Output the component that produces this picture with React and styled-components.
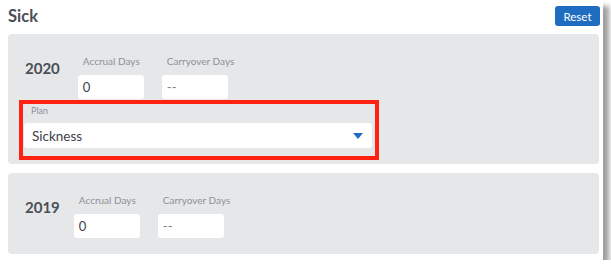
import React from "react";
import styled, { createGlobalStyle } from "styled-components";

const Global = createGlobalStyle`
  html, body { margin: 0; padding: 0; background: #ffffff; }
  body { font-family: "Lato", "Open Sans", sans-serif; }
  * { box-sizing: border-box; }
`;

const Card = styled.div`
  width: 603px;
  height: 260px;
  background: #ffffff;
  box-shadow: 6px 6px 5px rgba(0, 0, 0, 0.38);
  padding: 6px 4px 0 8px;
  display: flex;
  flex-direction: column;
`;

const Header = styled.div`
  display: flex;
  align-items: center;
  justify-content: space-between;
  height: 20px;
`;

const Title = styled.h2`
  margin: 0;
  font-size: 16.5px;
  font-weight: 700;
  color: #4a4f56;
  line-height: 20px;
`;

const ResetButton = styled.button`
  width: 45px;
  height: 20px;
  margin-right: -1px;
  border: none;
  border-radius: 3px;
  background: #1f6dc1;
  color: #ffffff;
  font-family: inherit;
  font-size: 11.5px;
  padding: 0;
`;

const Panel = styled.section`
  background: #e6e7e9;
  border-radius: 4px;
  margin-top: ${(p) => p.$mt}px;
  height: ${(p) => p.$h}px;
  padding: 21px 0 0 17px;
`;

const Row = styled.div`
  display: flex;
  align-items: flex-start;
`;

const Year = styled.div`
  font-size: 15px;
  line-height: 18px;
  font-weight: 700;
  color: #4a4f56;
  margin-top: 4px;
  margin-right: ${(p) => p.$mr}px;
`;

const Field = styled.div`
  display: flex;
  flex-direction: column;
  margin-right: 18px;
`;

const Label = styled.label`
  font-size: 10px;
  line-height: 12px;
  color: #8c9198;
  margin-left: 5px;
  margin-bottom: 8px;
  white-space: nowrap;
`;

const Input = styled.div`
  width: 66px;
  height: 24px;
  background: #ffffff;
  border-radius: 3px;
  padding-left: 5px;
  display: flex;
  align-items: center;
  font-size: 13px;
  color: ${(p) => (p.$muted ? "#7d828a" : "#3d4249")};
`;

const Highlight = styled.div`
  margin: 1px 0 0 -6px;
  width: 360px;
  height: 60px;
  border: 4px solid #ff2212;
  padding: 1px 3px 0 1px;
`;

const PlanLabel = styled.div`
  font-size: 9px;
  line-height: 11px;
  color: #8c9198;
  margin-left: 7px;
  margin-bottom: 7px;
`;

const Select = styled.div`
  height: 25px;
  background: #ffffff;
  border-radius: 3px;
  display: flex;
  align-items: center;
  justify-content: space-between;
  padding: 0 9px 0 8px;
  font-size: 13.5px;
  color: #3d4249;
`;

const Arrow = () => (
  <svg width="10" height="6" viewBox="0 0 10 6">
    <path d="M0 0 L10 0 L5 6 Z" fill="#1f6dc1" />
  </svg>
);

const YearRow = ({ year, mr, carry }) => (
  <Row>
    <Year $mr={mr}>{year}</Year>
    <Field>
      <Label>Accrual Days</Label>
      <Input>0</Input>
    </Field>
    <Field>
      <Label>Carryover Days</Label>
      <Input $muted>{carry}</Input>
    </Field>
  </Row>
);

export default function App() {
  return (
    <>
      <Global />
      <Card>
        <Header>
          <Title>Sick</Title>
          <ResetButton>Reset</ResetButton>
        </Header>
        <Panel $mt={8} $h={130}>
          <YearRow year="2020" mr={18} carry="--" />
          <Highlight>
            <PlanLabel>Plan</PlanLabel>
            <Select>
              <span>Sickness</span>
              <Arrow />
            </Select>
          </Highlight>
        </Panel>
        <Panel $mt={9} $h={81}>
          <YearRow year="2019" mr={14} carry="--" />
        </Panel>
      </Card>
    </>
  );
}
